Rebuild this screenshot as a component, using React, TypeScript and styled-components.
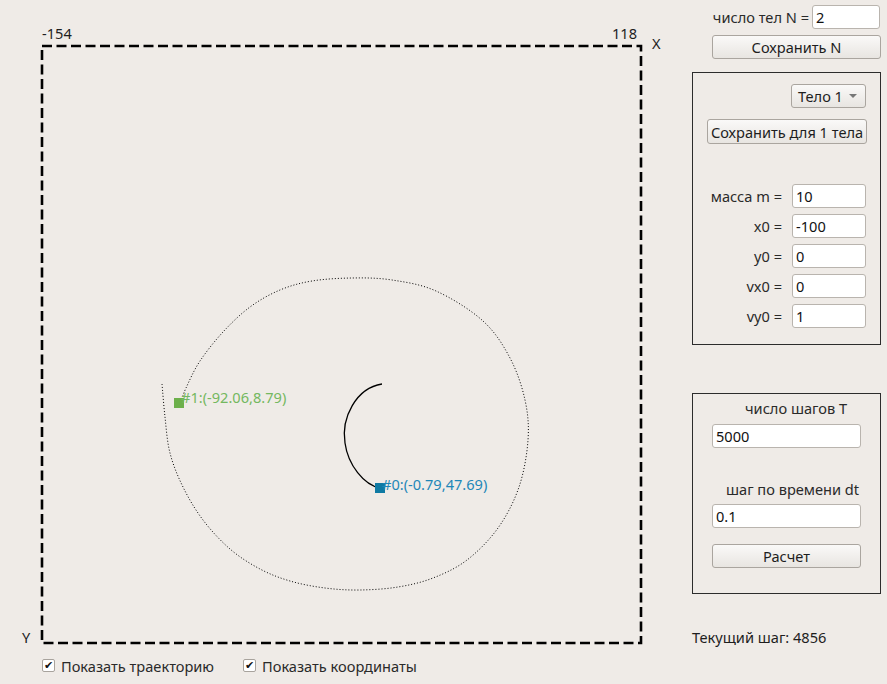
import React from "react";
import styled, { createGlobalStyle } from "styled-components";

const Global = createGlobalStyle`
  html, body { margin: 0; padding: 0; background: #efebe7; }
  body { font-family: "Noto Sans", "DejaVu Sans", sans-serif; font-size: 14.6px; color: #2a2a2a; }
  * { box-sizing: border-box; }
`;

const Page = styled.div`
  width: 887px;
  height: 684px;
  display: flex;
  background: #efebe7;
  overflow: hidden;
`;

const PlotArea = styled.div`
  width: 692px;
  display: flex;
  flex-direction: column;
`;

const PlotSvg = styled.svg`
  display: block;
  width: 692px;
  height: 652px;
  font-family: "Noto Sans", "DejaVu Sans", sans-serif;
  font-size: 14.6px;
`;

const OptionsRow = styled.div`
  display: flex;
  align-items: center;
  gap: 29px;
  padding-left: 42px;
  margin-top: 5px;
  height: 17px;
`;

const CheckItem = styled.label`
  display: flex;
  align-items: center;
  gap: 6px;
  line-height: 16px;
  color: #2a2a2a;
`;

const CheckBox = styled.span`
  width: 13px;
  height: 13px;
  border: 1px solid #a8a39d;
  border-radius: 2px;
  background: #fff;
  display: flex;
  align-items: center;
  justify-content: center;
  font-size: 11px;
  font-weight: bold;
  line-height: 1;
  color: #111;
  font-family: "DejaVu Sans", sans-serif;
`;

const Sidebar = styled.div`
  width: 189px;
  display: flex;
  flex-direction: column;
`;

const TopRow = styled.div`
  display: flex;
  justify-content: flex-end;
  align-items: center;
  gap: 3px;
  margin-top: 5px;
  padding-right: 1px;
`;

const FieldLabel = styled.span`
  line-height: 16px;
  white-space: nowrap;
  color: #2a2a2a;
`;

const TextInput = styled.div<{ $w: number }>`
  width: ${(p) => p.$w}px;
  height: 24px;
  background: #fff;
  border: 1px solid #b9b4ae;
  border-radius: 3px;
  padding: 0 3px;
  display: flex;
  align-items: center;
  color: #111;
  line-height: 16px;
`;

const PushButton = styled.div<{ $w: number; $h?: number; $ml: number; $mt: number }>`
  width: ${(p) => p.$w}px;
  height: ${(p) => p.$h ?? 24}px;
  margin-left: ${(p) => p.$ml}px;
  margin-top: ${(p) => p.$mt}px;
  border: 1px solid #aaa59f;
  border-radius: 3px;
  background: linear-gradient(#faf9f8, #e8e5e1);
  display: flex;
  align-items: center;
  justify-content: center;
  color: #1e1e1e;
  white-space: nowrap;
`;

const GroupBox = styled.div<{ $mt: number; $h: number }>`
  margin-top: ${(p) => p.$mt}px;
  height: ${(p) => p.$h}px;
  border: 1px solid #2c2c2c;
  display: flex;
  flex-direction: column;
`;

const ComboBox = styled.div`
  align-self: flex-end;
  margin: 11px 14px 0 0;
  width: 75px;
  height: 24px;
  border: 1px solid #aaa59f;
  border-radius: 3px;
  background: linear-gradient(#faf9f8, #e8e5e1);
  display: flex;
  align-items: center;
  justify-content: space-between;
  padding: 0 8px 0 6px;
  color: #1e1e1e;
`;

const ComboArrow = styled.span`
  width: 0;
  height: 0;
  border-left: 4px solid transparent;
  border-right: 4px solid transparent;
  border-top: 4px solid #777;
`;

const FormList = styled.div`
  display: flex;
  flex-direction: column;
  gap: 6px;
  margin-top: 40px;
  padding-right: 14px;
`;

const FormRow = styled.div`
  display: flex;
  justify-content: flex-end;
  align-items: center;
  gap: 10px;
`;

const CenterLabel = styled.div<{ $indent: number; $mt: number }>`
  margin-top: ${(p) => p.$mt}px;
  padding-left: ${(p) => p.$indent - 1}px;
  line-height: 16px;
  color: #2a2a2a;
`;

const BoxInput = styled(TextInput)<{ $mt: number }>`
  margin-top: ${(p) => p.$mt}px;
  margin-left: 19px;
`;

const StatusText = styled.div`
  margin-top: 35px;
  line-height: 16px;
  color: #1e1e1e;
`;

type Pt = [number, number];

const orbitPoints: Pt[] = [
  [162, 384], [165, 417], [170, 453], [183, 487], [203, 520], [230, 549],
  [260, 569], [290, 581], [325, 588], [360, 590], [398, 587], [433, 578],
  [467, 560], [498, 528], [519, 487], [528, 440], [525, 400], [510, 358],
  [483, 321], [436, 291], [392, 280], [352, 278], [312, 281], [280, 290],
  [250, 307], [223, 332], [200, 361], [186, 388], [181, 402],
];

function smoothPath(pts: Pt[]): string {
  let d = `M${pts[0][0]},${pts[0][1]}`;
  for (let i = 0; i < pts.length - 1; i++) {
    const p0 = pts[Math.max(0, i - 1)];
    const p1 = pts[i];
    const p2 = pts[i + 1];
    const p3 = pts[Math.min(pts.length - 1, i + 2)];
    const c1x = p1[0] + (p2[0] - p0[0]) / 6;
    const c1y = p1[1] + (p2[1] - p0[1]) / 6;
    const c2x = p2[0] - (p3[0] - p1[0]) / 6;
    const c2y = p2[1] - (p3[1] - p1[1]) / 6;
    d += ` C${c1x.toFixed(1)},${c1y.toFixed(1)} ${c2x.toFixed(1)},${c2y.toFixed(1)} ${p2[0]},${p2[1]}`;
  }
  return d;
}

const Plot: React.FC = () => (
  <PlotSvg viewBox="0 0 692 652">
    <rect
      x={42}
      y={46}
      width={599}
      height={597}
      fill="none"
      stroke="#000"
      strokeWidth={2.6}
      strokeDasharray="10 4.5"
    />
    <text x={42} y={39} fill="#1e1e1e">-154</text>
    <text x={637} y={39} fill="#1e1e1e" textAnchor="end">118</text>
    <text x={652} y={49} fill="#1e1e1e">X</text>
    <text x={22} y={643} fill="#1e1e1e">Y</text>
    <path d={smoothPath(orbitPoints)} fill="none" stroke="#000" strokeWidth={1} strokeDasharray="1 2" />
    <path
      d="M382,384 C356,388 341,418 345,443 C348,465 364,485 380,488"
      fill="none"
      stroke="#000"
      strokeWidth={1.3}
    />
    <rect x={174} y={398} width={10} height={10} fill="#6db04b" />
    <text x={181} y={403} fill="#74b860">#1:(-92.06,8.79)</text>
    <rect x={375} y={483} width={10} height={10} fill="#0f7aa3" />
    <text x={382} y={490} fill="#1e87b8">#0:(-0.79,47.69)</text>
  </PlotSvg>
);

const bodyFields: [string, string][] = [
  ["масса m =", "10"],
  ["x0 =", "-100"],
  ["y0 =", "0"],
  ["vx0 =", "0"],
  ["vy0 =", "1"],
];

export default function App() {
  return (
    <>
      <Global />
      <Page>
        <PlotArea>
          <Plot />
          <OptionsRow>
            <CheckItem>
              <CheckBox>✔</CheckBox>
              Показать траекторию
            </CheckItem>
            <CheckItem>
              <CheckBox>✔</CheckBox>
              Показать координаты
            </CheckItem>
          </OptionsRow>
        </PlotArea>
        <Sidebar>
          <TopRow>
            <FieldLabel>число тел N =</FieldLabel>
            <TextInput $w={68}>2</TextInput>
          </TopRow>
          <PushButton $w={169} $ml={20} $mt={6}>Сохранить N</PushButton>
          <GroupBox $mt={13} $h={273}>
            <ComboBox>
              Тело 1
              <ComboArrow />
            </ComboBox>
            <PushButton $w={160} $h={25} $ml={14} $mt={11}>Сохранить для 1 тела</PushButton>
            <FormList>
              {bodyFields.map(([label, value]) => (
                <FormRow key={label}>
                  <FieldLabel>{label}</FieldLabel>
                  <TextInput $w={74}>{value}</TextInput>
                </FormRow>
              ))}
            </FormList>
          </GroupBox>
          <GroupBox $mt={48} $h={201}>
            <CenterLabel $indent={53} $mt={6}>число шагов T</CenterLabel>
            <BoxInput $w={149} $mt={8}>5000</BoxInput>
            <CenterLabel $indent={34} $mt={33}>шаг по времени dt</CenterLabel>
            <BoxInput $w={149} $mt={7}>0.1</BoxInput>
            <PushButton $w={149} $ml={19} $mt={16}>Расчет</PushButton>
          </GroupBox>
          <StatusText>Текущий шаг: 4856</StatusText>
        </Sidebar>
      </Page>
    </>
  );
}
